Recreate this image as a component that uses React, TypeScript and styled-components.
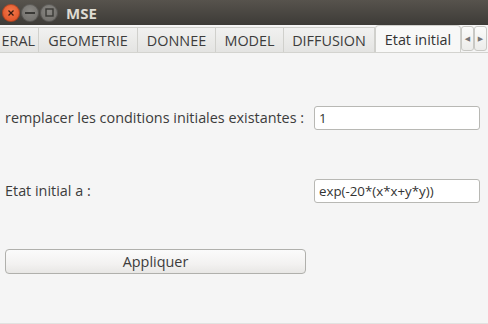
import styled, { createGlobalStyle } from "styled-components";

const GlobalStyle = createGlobalStyle`
  html, body {
    margin: 0;
    padding: 0;
    width: 488px;
    height: 324px;
    overflow: hidden;
    background: #f5f5f5;
    font-family: "Open Sans", "DejaVu Sans", sans-serif;
  }
`;

const Window = styled.div`
  display: flex;
  flex-direction: column;
  width: 488px;
  height: 324px;
  background: #f5f5f5;
  border-bottom: 1px solid #e2e2e0;
  box-sizing: border-box;
`;

const TitleBar = styled.div`
  display: flex;
  align-items: center;
  height: 25px;
  padding-left: 2px;
  gap: 1px;
  background: linear-gradient(#57534d, #3d3b37);
`;

const WinButton = styled.div<{ $close?: boolean }>`
  display: flex;
  align-items: center;
  justify-content: center;
  width: 18px;
  height: 18px;
  border-radius: 50%;
  background: ${(p) =>
    p.$close
      ? "radial-gradient(circle at 50% 40%, #f47a4c, #d9471c)"
      : "radial-gradient(circle at 50% 40%, #8a8884, #6a6864)"};
  box-shadow: inset 0 0 0 1px rgba(0, 0, 0, 0.25);
`;

const Title = styled.div`
  margin-left: 7px;
  font-size: 15px;
  font-weight: bold;
  color: #dfdbd2;
`;

const TabBar = styled.div`
  display: flex;
  align-items: flex-end;
  height: 27px;
  border-bottom: 1px solid #d3d3cf;
  background: #f5f5f5;
`;

const Tab = styled.div<{ $w: number; $active?: boolean }>`
  display: flex;
  align-items: center;
  justify-content: center;
  flex: none;
  box-sizing: border-box;
  width: ${(p) => p.$w}px;
  height: ${(p) => (p.$active ? 27 : 25)}px;
  border: 1px solid #d0d0cc;
  border-bottom: none;
  border-left: ${(p) => (p.$active ? "1px solid #d0d0cc" : "none")};
  border-radius: ${(p) => (p.$active ? "4px 4px 0 0" : "0")};
  background: ${(p) =>
    p.$active ? "#f8f8f7" : "linear-gradient(#f1f1f0, #e4e4e2)"};
  font-size: 14.4px;
  color: ${(p) => (p.$active ? "#333" : "#3c3c3c")};
  white-space: nowrap;
  overflow: hidden;
`;

const PartialTab = styled(Tab)`
  justify-content: flex-end;
  padding-right: 3px;
`;

const Arrow = styled.div`
  display: flex;
  align-items: center;
  justify-content: center;
  flex: none;
  box-sizing: border-box;
  width: 13px;
  height: 25px;
  margin-bottom: 1px;
  border: 1px solid #c8c8c4;
  border-radius: 3px;
  background: linear-gradient(#fbfbfa, #ececea);
  color: #777;
  font-size: 7px;
`;

const Content = styled.div`
  display: flex;
  flex-direction: column;
  padding: 52px 8px 0 5px;
`;

const Row = styled.div<{ $gap?: number }>`
  display: flex;
  align-items: center;
  justify-content: space-between;
  height: 25px;
  margin-top: ${(p) => p.$gap ?? 0}px;
`;

const Label = styled.div`
  font-size: 14.4px;
  color: #3c3c3c;
`;

const Field = styled.div`
  display: flex;
  align-items: center;
  box-sizing: border-box;
  width: 166px;
  height: 24px;
  padding-left: 4px;
  border: 1px solid #b8b8b4;
  border-radius: 3px;
  background: #fff;
  font-size: 13.3px;
  color: #333;
`;

const Button = styled.div`
  display: flex;
  align-items: center;
  justify-content: center;
  box-sizing: border-box;
  width: 301px;
  height: 25px;
  margin-top: 46px;
  border: 1px solid #b0b0ac;
  border-radius: 4px;
  background: linear-gradient(#fbfbfb, #f3f2f1 60%, #e8e7e5);
  font-size: 14.4px;
  color: #3c3c3c;
`;

export default function App() {
  return (
    <Window>
      <GlobalStyle />
      <TitleBar>
        <WinButton $close>
          <svg width="8" height="8" viewBox="0 0 8 8">
            <path d="M1.5 1.5 L6.5 6.5 M6.5 1.5 L1.5 6.5" stroke="#3a1a10" strokeWidth="1.3" />
          </svg>
        </WinButton>
        <WinButton>
          <svg width="10" height="4" viewBox="0 0 10 4">
            <rect x="0" y="1" width="10" height="2" fill="#3a3936" />
          </svg>
        </WinButton>
        <WinButton>
          <svg width="9" height="9" viewBox="0 0 9 9">
            <rect x="1" y="1" width="7" height="7" fill="none" stroke="#3a3936" strokeWidth="1.4" />
          </svg>
        </WinButton>
        <Title>MSE</Title>
      </TitleBar>
      <TabBar>
        <PartialTab $w={39}>ERAL</PartialTab>
        <Tab $w={99}>GEOMETRIE</Tab>
        <Tab $w={78}>DONNEE</Tab>
        <Tab $w={68}>MODEL</Tab>
        <Tab $w={91}>DIFFUSION</Tab>
        <Tab $w={86} $active>Etat initial</Tab>
        <Arrow>◀</Arrow>
        <Arrow>▶</Arrow>
      </TabBar>
      <Content>
        <Row>
          <Label>remplacer les conditions initiales existantes :</Label>
          <Field>1</Field>
        </Row>
        <Row $gap={48}>
          <Label>Etat initial a :</Label>
          <Field>exp(-20*(x*x+y*y))</Field>
        </Row>
        <Button>Appliquer</Button>
      </Content>
    </Window>
  );
}
